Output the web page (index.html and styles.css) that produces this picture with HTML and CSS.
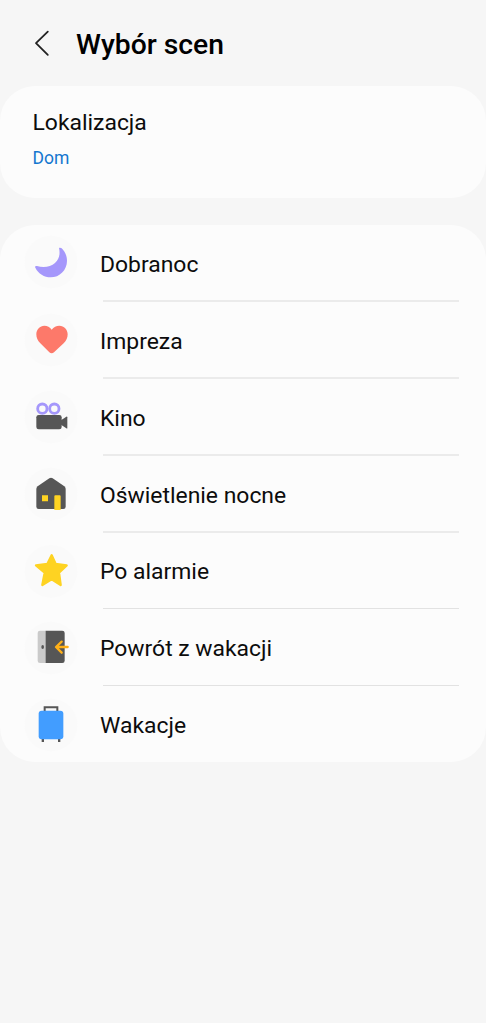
FILE: index.html
```html
<!DOCTYPE html>
<html lang="pl">
<head>
<meta charset="utf-8">
<title>Wybór scen</title>
<link rel="stylesheet" href="styles.css">
</head>
<body>
<header class="header">
  <svg class="back" viewBox="0 0 16 28"><path d="M13.8 2.6L2 14.2l11.8 11.6"/></svg>
  <h1 class="title">Wybór scen</h1>
</header>
<section class="card location">
  <div class="location-label">Lokalizacja</div>
  <div class="location-value">Dom</div>
</section>
<ul class="card scenes">
  <li class="scene">
    <svg class="icon" viewBox="1 3 192 192"><circle class="disc" cx="94" cy="96" r="79"/><path fill="#a597fb" d="M118 54c3-2 6-1 8 1 10 10 16 23 16 37 0 28-22 50-49 50-19 0-37-11-46-29-2-4 0-6 5-5 19 6 41 3 54-9 13-12 16-27 12-45z"/></svg>
    <span class="name">Dobranoc</span>
  </li>
  <li class="scene">
    <svg class="icon" viewBox="1 0 192 192"><circle class="disc" cx="94" cy="96" r="79"/><path fill="#fd796a" d="M96 65c6-8 14-12 23-12 14 0 25 11 25 26 0 10-4 19-12 27l-29 27c-4 4-10 4-14 0l-27-27c-8-8-12-17-12-27 0-15 11-26 24-26 9 0 17 4 22 12z"/></svg>
    <span class="name">Impreza</span>
  </li>
  <li class="scene">
    <svg class="icon" viewBox="1 0 192 192"><circle class="disc" cx="94" cy="96" r="79"/><g fill="none" stroke="#a597fb" stroke-width="8.5"><circle cx="68" cy="71" r="14"/><circle cx="104" cy="71" r="14"/></g><rect x="50" y="90" width="76" height="43" rx="7" fill="#565656"/><path fill="#565656" d="M124 106l16-11q3-1 3 2v32q0 3-3 1l-16-11z"/></svg>
    <span class="name">Kino</span>
  </li>
  <li class="scene">
    <svg class="icon" viewBox="1 0 192 192"><circle class="disc" cx="94" cy="96" r="79"/><path fill="#565656" d="M89 49q5-3 10 0l35 24q4 3 4 8v53q0 7-7 7H57q-7 0-7-7V81q0-5 4-8z"/><path fill="#fed322" d="M67 100h18v18H67zM104 103q0-3 3-3h13q3 0 3 3v41h-19z"/></svg>
    <span class="name">Oświetlenie nocne</span>
  </li>
  <li class="scene scene--late">
    <svg class="icon" viewBox="1 -1 192 192"><circle class="disc" cx="94" cy="96" r="79"/><path fill="#fed322" stroke="#fed322" stroke-width="7" stroke-linejoin="round" d="M96 48l12 26 33 4-23 22 5 37-27-17-28 17 7-37-26-22 34-4z"/></svg>
    <span class="name">Po alarmie</span>
  </li>
  <li class="scene scene--late">
    <svg class="icon" viewBox="1 0 192 192"><circle class="disc" cx="94" cy="96" r="79"/><path fill="#cacaca" d="M79 44H61q-7 0-7 7v83q0 7 7 7h18z"/><path fill="#565656" d="M78 44h50q7 0 7 7v83q0 7-7 7H78z"/><ellipse cx="69" cy="93" rx="4" ry="6" fill="#565656"/><path fill="none" stroke="#ffb017" stroke-width="7" stroke-linecap="round" stroke-linejoin="round" d="M144 93h-34M126 77l-17 16 17 17"/></svg>
    <span class="name">Powrót z wakacji</span>
  </li>
  <li class="scene scene--late">
    <svg class="icon" viewBox="1 0 192 192"><circle class="disc" cx="94" cy="96" r="79"/><path fill="none" stroke="#565656" stroke-width="6" d="M75 55V43h38v12"/><path fill="#565656" d="M66 135h7v12h-7zM115 135h7v12h-7z"/><rect x="57" y="53" width="74" height="86" rx="9" fill="#429dff"/></svg>
    <span class="name">Wakacje</span>
  </li>
</ul>
</body>
</html>
```
FILE: styles.css
```css
* {
  box-sizing: border-box;
}

body {
  margin: 0;
  min-height: 100vh;
  background: #f6f6f6;
  color: #0c0c0c;
  font-family: Roboto, "Noto Sans", sans-serif;
}

.header {
  display: flex;
  align-items: center;
  gap: 26px;
  height: 86px;
  padding-left: 34px;
}

.back {
  width: 16px;
  height: 28px;
  fill: none;
  stroke: #222;
  stroke-width: 1.8;
  stroke-linecap: round;
  stroke-linejoin: round;
}

.title {
  margin: 3px 0 0;
  font-size: 28.3px;
  font-weight: 500;
  line-height: 34px;
  color: #000;
}

.card {
  margin: 0;
  border-radius: 35px;
  background: #fcfcfc;
}

.location {
  height: 112px;
  padding: 23px 32.5px 0;
}

.location-label {
  font-size: 22.9px;
  line-height: 28px;
}

.location-value {
  margin-top: 9px;
  font-size: 17.5px;
  line-height: 24px;
  color: #1477cf;
}

.scenes {
  margin-top: 27px;
  padding: 0;
  list-style: none;
}

.scene {
  display: grid;
  grid-template-columns: 64px 1fr;
  column-gap: 16px;
  height: 77px;
  padding: 6px 27px 0 20px;
  background: linear-gradient(#ebebeb, #ebebeb) 103px 75px / 356px 2px no-repeat;
}

.scene--late {
  background: linear-gradient(#e2e2e2, #e2e2e2) 103px 75px / 356px 1px no-repeat;
}

.scene:last-child {
  height: 75px;
  background: none;
}

.icon {
  width: 64px;
  height: 64px;
}

.disc {
  fill: #fafafa;
}

.name {
  padding-top: 20px;
  font-size: 22.9px;
  line-height: 28px;
}

.scene--late .name {
  padding-top: 19px;
}
```
